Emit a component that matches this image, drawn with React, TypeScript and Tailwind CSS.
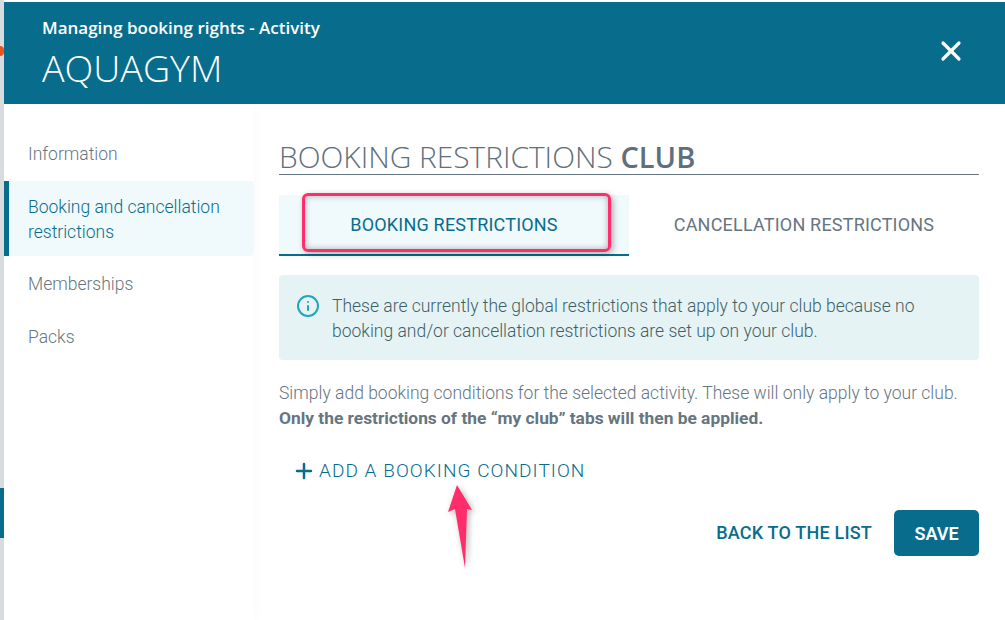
import React from 'react';
import { X, Plus, Info } from 'lucide-react';

const menuItems = ['Information', 'Booking and cancellation restrictions', 'Memberships', 'Packs'];

const App = () => {
  return (
    <div className="relative flex h-[620px] w-[1005px] overflow-hidden bg-white font-['Roboto',sans-serif]">
      {/* page behind the modal */}
      <div className="flex w-[4px] shrink-0 flex-col bg-[#d9dcdf]">
        <div className="mt-[46px] h-[10px] rounded-r-full bg-[#e8531f]" />
        <div className="mt-[432px] h-[50px] bg-[#086d8c]" />
      </div>

      <div className="flex min-w-0 flex-1 flex-col">
        <div className="mt-[2px] flex h-[102px] items-center justify-between bg-[#086d8c] pl-[38px] pr-[38px] text-white">
          <div className="font-['Open_Sans',sans-serif]">
            <div className="text-[17px] leading-[22px] font-semibold">Managing booking rights - Activity</div>
            <div className="mt-[7px] text-[37.6px] leading-[44px] font-light">AQUAGYM</div>
          </div>
          <X size={32} strokeWidth={2.4} className="-mt-[4px]" />
        </div>

        <div className="flex flex-1">
          <div className="w-[250px] shrink-0 pt-[24px] shadow-[3px_0_10px_rgba(0,0,0,0.02)]">
            {menuItems.map((item) => {
              const active = item.startsWith('Booking');
              return (
                <div
                  key={item}
                  className={
                    active
                      ? 'mb-[2px] rounded-r-[4px] border-l-[5px] border-[#086d8c] bg-[#f0f9fb] pb-[11px] pl-[19px] pr-[20px] pt-[14px] text-[17.5px] leading-[25px] font-light text-[#086d8c]'
                      : 'py-[14px] pl-[24px] pr-[20px] text-[17.5px] leading-[25px] font-light text-[#66757f]'
                  }
                >
                  {item}
                </div>
              );
            })}
          </div>

          <div className="min-w-0 flex-1 pl-[25px] pr-[26px] pt-[35px]">
            <h1 className="h-[36px] border-b border-[#66757f] font-['Open_Sans',sans-serif] text-[29.85px] leading-[36px] font-light text-[#5f6f7c]">
              BOOKING RESTRICTIONS <span className="text-[29px] font-semibold">CLUB</span>
            </h1>

            <div className="mt-[20px] flex tracking-[0.2px]">
              <div className="flex h-[61px] flex-1 items-center justify-center border-b-2 border-[#086d8c] bg-[#f0f9fb] text-[18px] text-[#086d8c]">
                BOOKING RESTRICTIONS
              </div>
              <div className="flex h-[61px] flex-1 items-center justify-center pb-[2px] text-[18px] text-[#66757f]">
                CANCELLATION RESTRICTIONS
              </div>
            </div>

            <div className="mt-[19px] flex h-[85px] gap-[12px] rounded-[4px] bg-[#e6f3f5] pl-[17px] pr-[20px] pt-[19px] text-[17.5px] leading-[25px] font-light text-[#3f5f68]">
              <Info size={24} strokeWidth={2} className="shrink-0 text-[#21a5bf]" />
              <p>
                These are currently the global restrictions that apply to your club because no booking and/or cancellation
                restrictions are set up on your club.
              </p>
            </div>

            <p className="mt-[21px] text-[17.5px] leading-[25px] font-light text-[#66757f]">
              Simply add booking conditions for the selected activity. These will only apply to your club.
              <br />
              <span className="text-[17.35px] font-bold">Only the restrictions of the “my club” tabs will then be applied.</span>
            </p>

            <div className="mt-[27px] flex items-center gap-[3px] pl-[13px] text-[19px] leading-[25px] font-light tracking-[1.05px] text-[#086d8c]">
              <Plus size={24} strokeWidth={2.5} />
              ADD A BOOKING CONDITION
            </div>

            <div className="mt-[27px] flex items-center justify-end gap-[22px]">
              <button className="pb-[2px] text-[18px] font-medium tracking-[0.2px] text-[#086d8c]">BACK TO THE LIST</button>
              <button className="h-[46px] w-[85px] rounded-[5px] bg-[#086d8c] text-[18px] font-semibold text-white">SAVE</button>
            </div>
          </div>
        </div>
      </div>

      {/* annotations drawn over the screenshot */}
      <div className="absolute left-[302px] top-[193px] h-[59px] w-[309px] rounded-[6px] border-[3px] border-[#ff2d6b] shadow-[2px_2px_6px_rgba(0,0,0,0.3),inset_0_0_6px_rgba(0,0,0,0.3)]" />
      <svg className="absolute left-[440px] top-[480px] h-[92px] w-[40px] drop-shadow-[2px_2px_3px_rgba(0,0,0,0.3)]" viewBox="0 0 40 92">
        <path d="M17 5 L8 32 L15 29 L25 88 L27 29 L32 30 Z" fill="#ff2d6b" />
      </svg>
    </div>
  );
};

export default App;
